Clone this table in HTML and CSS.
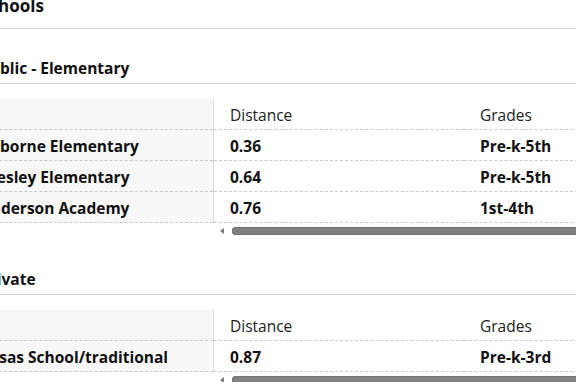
FILE: index.html
```html
<!DOCTYPE html>
<html lang="en">
<head>
<meta charset="utf-8">
<title>Schools</title>
<link rel="stylesheet" href="styles.css">
</head>
<body>
<div class="page">
  <h2 class="title">Schools</h2>

  <section class="group">
    <h3 class="group-title">Public - Elementary</h3>
    <div class="grid">
      <div class="names">
        <div class="cell head"></div>
        <div class="cell">Osborne Elementary</div>
        <div class="cell">Presley Elementary</div>
        <div class="cell">Anderson Academy</div>
      </div>
      <div class="scroller">
        <div class="scroll-view">
          <div class="row head">
            <div class="cell dist">Distance</div>
            <div class="cell grades">Grades</div>
            <div class="cell rating">Rating</div>
          </div>
          <div class="row">
            <div class="cell dist">0.36</div>
            <div class="cell grades">Pre-k-5th</div>
            <div class="cell rating">8/10</div>
          </div>
          <div class="row">
            <div class="cell dist">0.64</div>
            <div class="cell grades">Pre-k-5th</div>
            <div class="cell rating">7/10</div>
          </div>
          <div class="row">
            <div class="cell dist">0.76</div>
            <div class="cell grades">1st-4th</div>
            <div class="cell rating">6/10</div>
          </div>
        </div>
        <div class="scrollbar"><span class="arrow"></span><span class="thumb"></span></div>
      </div>
    </div>
  </section>

  <section class="group">
    <h3 class="group-title private">Private</h3>
    <div class="grid">
      <div class="names">
        <div class="cell head"></div>
        <div class="cell">Casas School/traditional</div>
      </div>
      <div class="scroller">
        <div class="scroll-view">
          <div class="row head">
            <div class="cell dist">Distance</div>
            <div class="cell grades">Grades</div>
            <div class="cell rating">Rating</div>
          </div>
          <div class="row">
            <div class="cell dist">0.87</div>
            <div class="cell grades">Pre-k-3rd</div>
            <div class="cell rating">NR</div>
          </div>
        </div>
        <div class="scrollbar"><span class="arrow"></span><span class="thumb"></span></div>
      </div>
    </div>
  </section>
</div>
</body>
</html>
```

FILE: styles.css
```css
html, body {
  margin: 0;
  padding: 0;
  background: #fff;
  overflow: hidden;
}

body {
  font-family: "Open Sans", "Liberation Sans", sans-serif;
  color: #111;
}

/* the page is scrolled slightly right and down inside the window */
.page {
  margin: -6px 0 0 -36px;
}

.title {
  margin: 0;
  padding: 0 16px 11px;
  font-size: 17px;
  line-height: 23px;
  font-weight: 700;
  border-bottom: 1px solid #cfcfcf;
}

.group {
  margin-top: 29px;
}

.group + .group {
  margin-top: 30px;
}

.group-title {
  margin: 0 0 15px;
  padding: 0 16px 5px;
  font-size: 15.5px;
  line-height: 20px;
  font-weight: 700;
  border-bottom: 1px solid #d2d2d2;
}

.grid {
  display: flex;
  align-items: flex-start;
}

.cell {
  box-sizing: border-box;
  height: 31px;
  padding: 6px 16px 4px;
  font-size: 15.5px;
  line-height: 20px;
  white-space: nowrap;
  border-bottom: 1px dashed #cbcbcb;
}

/* pinned first column with school names */
.names {
  flex: 0 0 250px;
  box-sizing: border-box;
  background: #f8f8f8;
  border-right: 1px solid #dcdcdc;
  font-weight: 700;
}

.names .head {
  background: #f6f6f6;
}

.scroller {
  flex: 1;
  min-width: 0;
}

.scroll-view {
  overflow: hidden;
}

.row {
  display: flex;
  font-weight: 700;
}

.row.head {
  font-weight: 400;
  color: #222;
}

.row .cell {
  flex: 0 0 auto;
}

.dist {
  width: 250px;
}

.grades {
  width: 200px;
}

.rating {
  width: 160px;
}

.scrollbar {
  display: flex;
  align-items: center;
  gap: 8px;
  height: 16px;
  padding-left: 6px;
}

.arrow {
  width: 0;
  height: 0;
  border-top: 3px solid transparent;
  border-bottom: 3px solid transparent;
  border-right: 4px solid #7d7d7d;
}

.thumb {
  flex: 1;
  height: 8px;
  margin-right: -20px;
  border-radius: 4px;
  background: #808080;
  box-shadow: inset 0 0 0 1px #727272;
}
```
